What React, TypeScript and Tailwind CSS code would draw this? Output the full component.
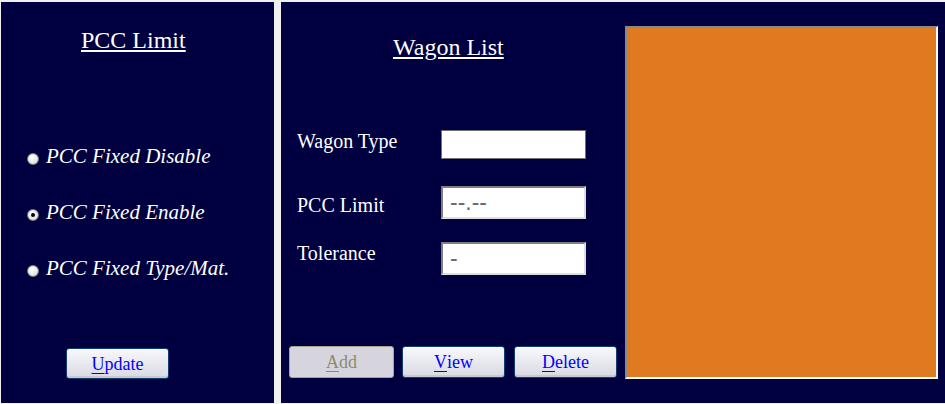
import React from "react";

function Btn({
  first,
  rest,
  w,
  h,
  disabled,
  className = "",
}: {
  first: string;
  rest: string;
  w: string;
  h: string;
  disabled?: boolean;
  className?: string;
}) {
  const base =
    "rounded-[3px] flex items-center justify-center text-[18px] leading-none font-['Liberation_Serif',serif] ";
  const style = disabled
    ? "border border-[#a8a494] bg-[#d6d5dd] text-[#8e8b70]"
    : "border border-[#0c3f70] bg-linear-to-b from-[#f8f8fd] to-[#d9d9e3] shadow-[inset_0_1px_0_#ffffff,inset_0_-2px_0_#c9c9d2] text-[#0000ff]";
  return (
    <div className={`${base}${style} ${w} ${h} ${className}`}>
      <span className="underline underline-offset-[3px]">{first}</span>
      <span>{rest}</span>
    </div>
  );
}

function Radio({ label, checked }: { label: string; checked?: boolean }) {
  return (
    <div className="flex items-start h-[21px]">
      <span className="mt-[7px] w-[12px] h-[12px] rounded-full border border-[#7c7c7c] bg-[radial-gradient(circle_at_40%_35%,#ffffff,#d6d6d6)] flex items-center justify-center shrink-0">
        {checked && <span className="w-[4px] h-[4px] rounded-full bg-black" />}
      </span>
      <span className="ml-[7px] italic text-[21px] leading-none text-white whitespace-nowrap">
        {label}
      </span>
    </div>
  );
}

export default function App() {
  return (
    <div className="w-[945px] h-[404px] bg-[#f0f0f0] flex pt-[2px] pl-[1px] gap-[7px] font-['Liberation_Serif',serif] overflow-hidden">
      {/* Left panel */}
      <div className="w-[273px] h-[401px] bg-[#000040] flex flex-col shrink-0">
        <div className="mt-[26px] ml-[80px] text-[24px] leading-none text-white underline underline-offset-[2px] whitespace-nowrap">
          PCC Limit
        </div>
        <div className="mt-[94px] ml-[26px] flex flex-col gap-[35px]">
          <Radio label="PCC Fixed Disable" />
          <Radio label="PCC Fixed Enable" checked />
          <Radio label="PCC Fixed Type/Mat." />
        </div>
        <div className="mt-[69px] ml-[65px]">
          <Btn first="U" rest="pdate" w="w-[103px]" h="h-[31px]" />
        </div>
      </div>

      {/* Right panel */}
      <div className="flex-1 h-[401px] bg-[#000040] flex">
        <div className="w-[344px] flex flex-col shrink-0">
          <div className="mt-[33px] ml-[112px] text-[24px] leading-none text-white underline underline-offset-[2px] whitespace-nowrap">
            Wagon List
          </div>

          <div className="mt-[71px] flex h-[29px]">
            <div className="w-[160px] pl-[16px] mt-[1px] text-[20px] leading-none text-white whitespace-nowrap">
              Wagon Type
            </div>
            <div className="w-[145px] h-[29px] bg-white border border-[#707070]" />
          </div>

          <div className="mt-[27px] flex h-[33px]">
            <div className="w-[160px] pl-[16px] mt-[9px] text-[20px] leading-none text-white whitespace-nowrap">
              PCC Limit
            </div>
            <div className="w-[145px] h-[33px] bg-white border-2 border-t-[#7f7f7f] border-l-[#7f7f7f] border-b-[#dedede] border-r-[#dedede] flex items-center pl-[7px] font-['Liberation_Sans',sans-serif] text-[23px] leading-none text-[#6a6a6a]">
              --.--
            </div>
          </div>

          <div className="mt-[23px] flex h-[33px]">
            <div className="w-[160px] pl-[16px] mt-[1px] text-[20px] leading-none text-white whitespace-nowrap">
              Tolerance
            </div>
            <div className="w-[145px] h-[33px] bg-white border-2 border-t-[#7f7f7f] border-l-[#7f7f7f] border-b-[#dedede] border-r-[#dedede] flex items-center pl-[7px] font-['Liberation_Sans',sans-serif] text-[23px] leading-none text-[#6a6a6a]">
              -
            </div>
          </div>

          <div className="mt-[71px] ml-[8px] flex">
            <Btn first="A" rest="dd" w="w-[105px]" h="h-[32px]" disabled />
            <Btn first="V" rest="iew" w="w-[103px]" h="h-[32px]" className="ml-[8px]" />
            <Btn first="D" rest="elete" w="w-[103px]" h="h-[32px]" className="ml-[9px]" />
          </div>
        </div>

        <div className="mt-[24px] w-[313px] h-[353px] bg-[#e07a20] border-2 border-t-[#888888] border-l-[#888888] border-b-white border-r-white shrink-0" />
      </div>
    </div>
  );
}
